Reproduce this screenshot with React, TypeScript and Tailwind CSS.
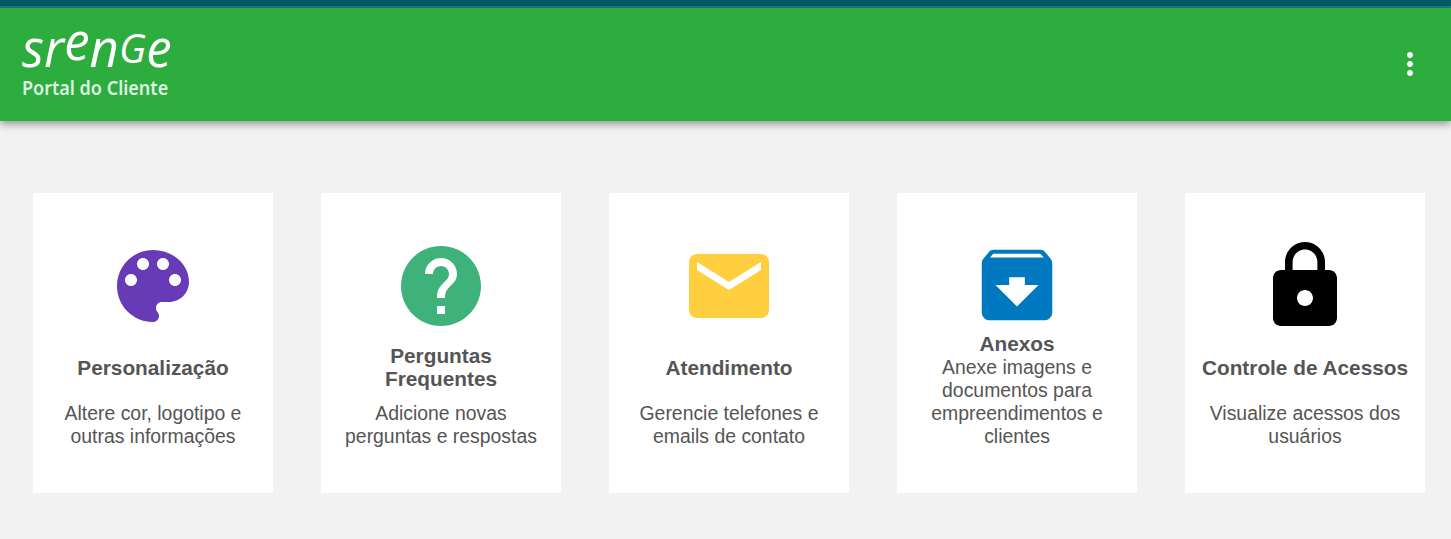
import React from "react";
import { MdEmail, MdHelp, MdLock, MdMoreVert } from "react-icons/md";

function PaletteIcon(): JSX.Element {
  return (
    <svg viewBox="0 0 24 24" className="h-24 w-24 fill-[#673ab7]">
      <path d="M12 3c-4.97 0-9 4.03-9 9s4.03 9 9 9c.83 0 1.5-.67 1.5-1.5 0-.39-.15-.74-.39-1.01-.23-.26-.38-.61-.38-.99 0-.83.67-1.5 1.5-1.5H16c2.76 0 5-2.24 5-5 0-4.42-4.03-8-9-8zm-5.5 9c-.83 0-1.5-.67-1.5-1.5S5.67 9 6.5 9 8 9.67 8 10.5 7.33 12 6.5 12zm3-4C8.67 8 8 7.33 8 6.5S8.67 5 9.5 5s1.5.67 1.5 1.5S10.33 8 9.5 8zm5 0c-.83 0-1.5-.67-1.5-1.5S13.67 5 14.5 5s1.5.67 1.5 1.5S15.33 8 14.5 8zm3 4c-.83 0-1.5-.67-1.5-1.5S16.67 9 17.5 9s1.5.67 1.5 1.5-.67 1.5-1.5 1.5z" />
    </svg>
  );
}

function ArchiveIcon(): JSX.Element {
  return (
    <svg viewBox="0 0 24 24" className="h-24 w-24 fill-[#0079c1]">
      <path d="M20.54 5.23l-1.39-1.68C18.88 3.21 18.47 3 18 3H6c-.47 0-.88.21-1.16.55L3.46 5.23C3.17 5.57 3 6.02 3 6.5V19c0 1.1.9 2 2 2h14c1.1 0 2-.9 2-2V6.5c0-.48-.17-.93-.46-1.27zM12 17.5L6.5 12H10v-2h4v2h3.5L12 17.5zM5.12 5l.81-1h12l.94 1H5.12z" />
    </svg>
  );
}

const cards = [
  {
    id: 1,
    title: "Personalização",
    text: "Altere cor, logotipo e outras informações",
    icon: <PaletteIcon />,
  },
  {
    id: 2,
    title: "Perguntas Frequentes",
    text: "Adicione novas perguntas e respostas",
    icon: <MdHelp className="text-[96px] text-[#3eb27a]" />,
  },
  {
    id: 3,
    title: "Atendimento",
    text: "Gerencie telefones e emails de contato",
    icon: <MdEmail className="text-[96px] text-[#ffcf40]" />,
  },
  {
    id: 4,
    title: "Anexos",
    text: "Anexe imagens e documentos para empreendimentos e clientes",
    icon: <ArchiveIcon />,
    compact: true,
  },
  {
    id: 5,
    title: "Controle de Acessos",
    text: "Visualize acessos dos usuários",
    icon: <MdLock className="text-[96px] text-black" />,
  },
];

function Logo(): JSX.Element {
  return (
    <div className="flex flex-col text-white">
      <div className="flex h-[37px] items-end font-['Open_Sans',sans-serif] text-[51px] leading-[41px] font-normal italic">
        <span>s</span>
        <span>r</span>
        <span className="relative -top-[7px]">e</span>
        <span>n</span>
        <span className="text-[40px] leading-[41px]">G</span>
        <span>e</span>
      </div>
      <span className="mt-[9px] origin-left scale-x-90 font-['Noto_Sans',sans-serif] text-[20px] leading-[22px] font-semibold text-[#dff1e0]">
        Portal do Cliente
      </span>
    </div>
  );
}

function App(): JSX.Element {
  return (
    <div className="flex min-h-screen flex-col overflow-hidden bg-[#f2f2f2] font-['Liberation_Sans',sans-serif] text-[#555]">
      {/* navbar */}
      <div className="border-t-[6px] border-[#005a64]">
        <div className="h-[2px] bg-[#1f7a80]" />
        <header className="flex h-[113px] items-center justify-between bg-[#2ead3f] pr-[23px] pl-[22px] shadow-[0_3px_8px_rgba(0,0,0,0.4)]">
          <Logo />
          <button className="mb-[2px] text-white">
            <MdMoreVert className="text-[36px]" />
          </button>
        </header>
      </div>

      {/* cards */}
      <main className="flex gap-12 pt-[72px] pl-[33px]">
        {cards.map((card) => {
          return (
            <div
              key={card.id}
              className="flex h-[300px] w-[240px] flex-none flex-col items-center justify-between bg-white px-4 pt-[45px] pb-[45px] text-center"
            >
              {card.icon}
              <div className="flex flex-col items-center">
                <h2
                  className={`flex items-center justify-center text-[20.8px] leading-[23px] font-bold ${
                    card.compact ? "pb-[1px]" : "min-h-[46px] pb-[1px]"
                  }`}
                >
                  {card.title}
                </h2>
                <p className={`text-[19.4px] leading-[23px] ${card.compact ? "" : "mt-[11px]"}`}>{card.text}</p>
              </div>
            </div>
          );
        })}
      </main>
    </div>
  );
}

export default App;
